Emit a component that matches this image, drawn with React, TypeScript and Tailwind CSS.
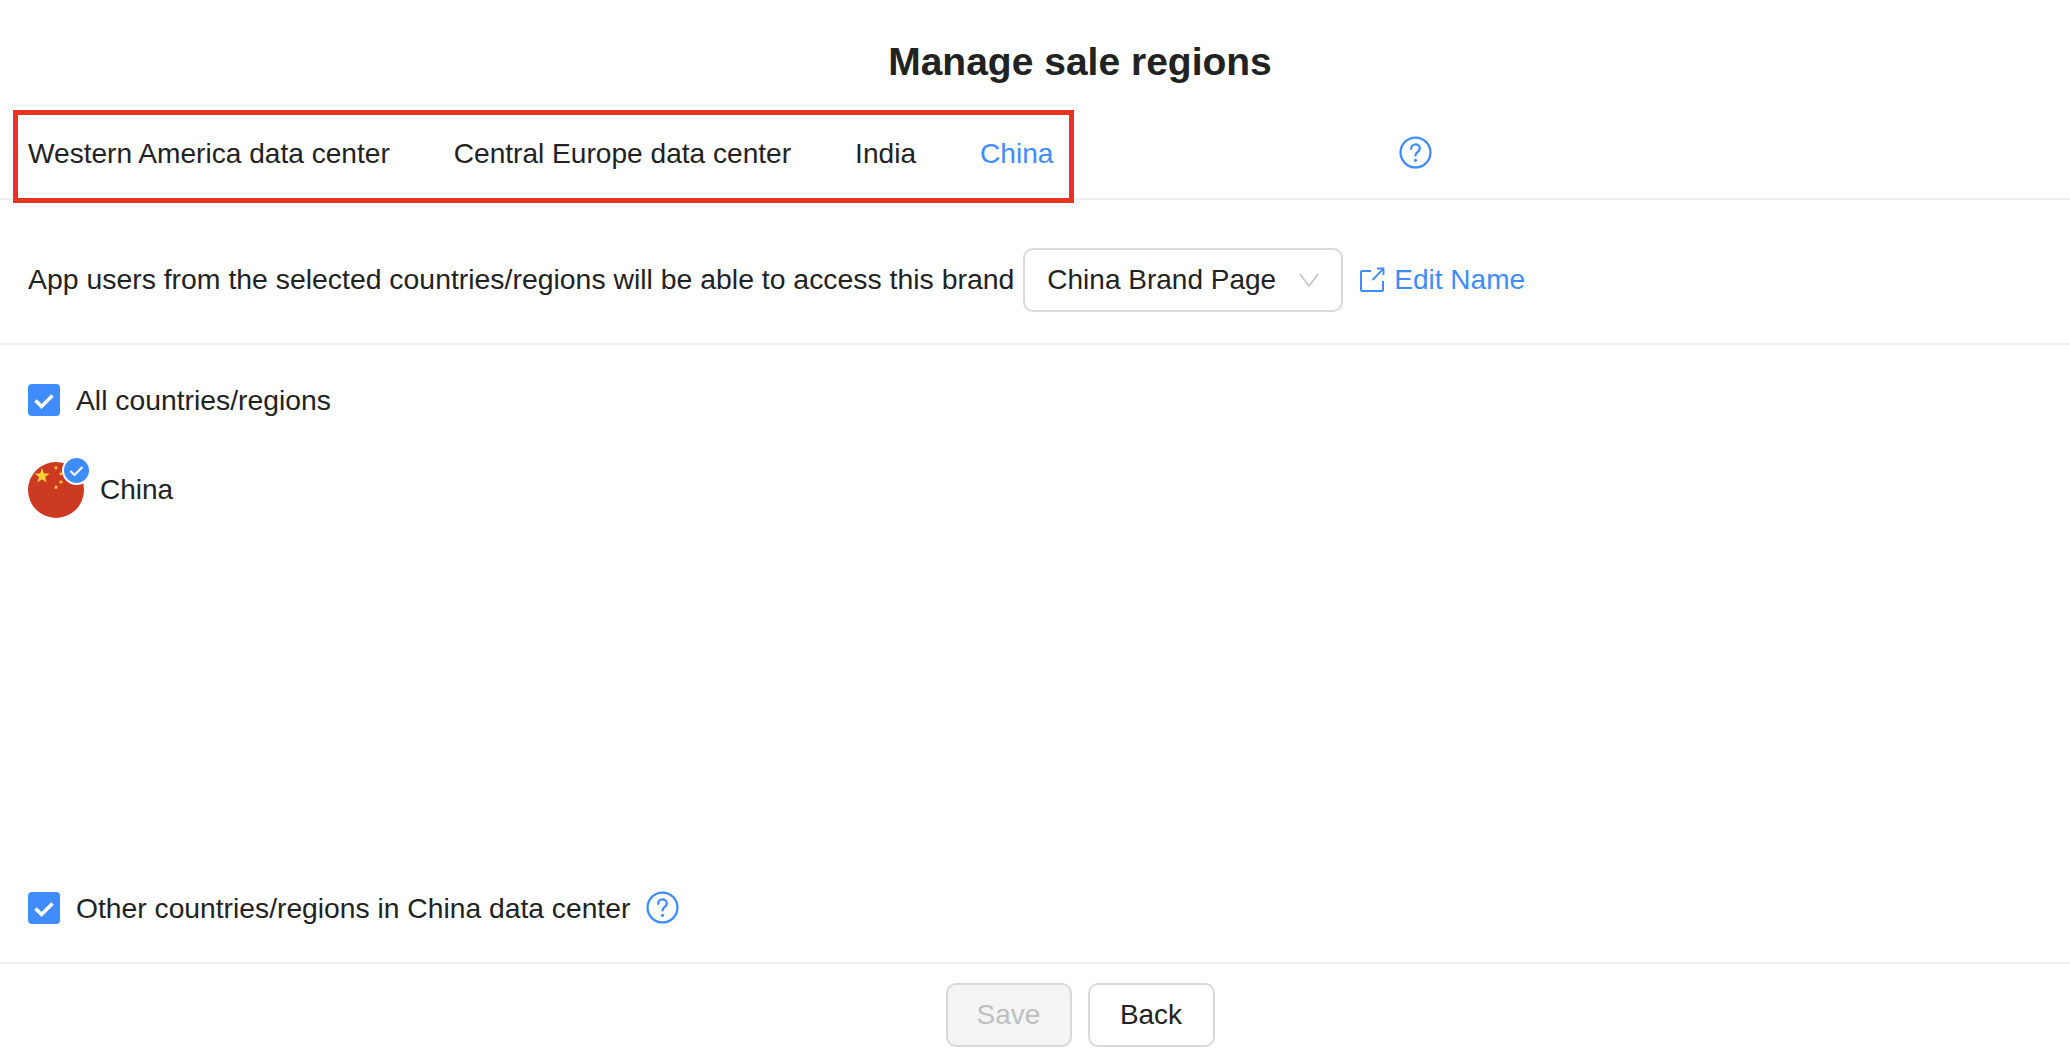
const font = "font-['Liberation_Sans',Arial,sans-serif]";

function HelpIcon({ className }: { className?: string }) {
  return (
    <svg viewBox="0 0 32 32" fill="none" className={className}>
      <circle cx="16" cy="16" r="14.5" stroke="#3f8cff" strokeWidth="2.2" />
      <path
        d="M11.8 12.4c0-2.5 1.9-4.2 4.2-4.2s4.2 1.6 4.2 3.8c0 3.3-4.2 3.4-4.2 6.8"
        stroke="#3f8cff"
        strokeWidth="2.2"
        strokeLinecap="round"
      />
      <circle cx="16" cy="23.6" r="1.5" fill="#3f8cff" />
    </svg>
  );
}

function EditIcon() {
  return (
    <svg viewBox="0 0 25 25" fill="none" className="h-[25px] w-[25px]">
      <path
        d="M11 4H2a1 1 0 0 0-1 1v18a1 1 0 0 0 1 1h20a1 1 0 0 0 1-1V14"
        stroke="#3f8cff"
        strokeWidth="2"
      />
      <path d="M12.5 13 23 2.2M17 1.5h6.5V8" stroke="#3f8cff" strokeWidth="1.8" />
    </svg>
  );
}

function CheckBox() {
  return (
    <span className="flex h-8 w-8 shrink-0 items-center justify-center rounded bg-[#3f8cff]">
      <svg viewBox="0 0 32 32" fill="none" className="h-8 w-8">
        <path d="m7.5 16.5 6 6 11-11" stroke="#fff" strokeWidth="3.6" />
      </svg>
    </span>
  );
}

// five pointed star centred on cx, cy
function star(cx: number, cy: number, r: number) {
  const pts: string[] = [];
  for (let i = 0; i < 10; i++) {
    const a = -Math.PI / 2 + (i * Math.PI) / 5;
    const d = i % 2 === 0 ? r : r * 0.4;
    pts.push(`${(cx + d * Math.cos(a)).toFixed(2)},${(cy + d * Math.sin(a)).toFixed(2)}`);
  }
  return pts.join(" ");
}

function ChinaFlag() {
  return (
    <svg viewBox="0 0 56 56" className="h-14 w-14">
      <circle cx="28" cy="28" r="28" fill="#cc3a21" />
      <polygon points={star(14, 14, 8)} fill="#fbd136" />
      <polygon points={star(28, 5.8, 2.5)} fill="#fbd136" />
      <polygon points={star(33, 11.7, 2.5)} fill="#fbd136" />
      <polygon points={star(33, 20, 2.5)} fill="#fbd136" />
      <polygon points={star(28, 25.3, 2.5)} fill="#fbd136" />
    </svg>
  );
}

const tabs = ["Western America data center", "Central Europe data center", "India", "China"];

export default function App() {
  return (
    <div className={`${font} relative flex h-[1060px] w-full flex-col overflow-hidden bg-white text-[28px] text-[#222222]`}>
      <h1 className="flex h-[112px] shrink-0 items-center justify-center pt-[10px] pl-[90px] text-[39px] leading-none font-bold">
        Manage sale regions
      </h1>

      <div className="flex h-[88px] shrink-0 items-center border-b-2 border-[#efefef] pb-[2px] pl-7">
        <div className="flex gap-16 text-[28.1px]">
          {tabs.map((t) => (
            <span key={t} className={t === "China" ? "text-[#3f8cff]" : ""}>
              {t}
            </span>
          ))}
        </div>
        <HelpIcon className="mb-[4px] ml-[346px] h-[33px] w-[33px]" />
      </div>

      <div className="flex h-[145px] shrink-0 items-center border-b-2 border-[#efefef] pt-[16px] pl-7">
        <span className="text-[28.4px]">App users from the selected countries/regions will be able to access this brand</span>
        <div className="ml-[9px] flex h-16 w-[320px] items-center justify-between rounded-[10px] border-2 border-[#d9d9d9] pr-[22px] pl-[22px]">
          <span>China Brand Page</span>
          <svg viewBox="0 0 20 14" fill="none" className="h-[14px] w-5">
            <path d="m1 1 9 12 9-12" stroke="#c4c4c4" strokeWidth="1.6" />
          </svg>
        </div>
        <div className="ml-[17px] flex items-center gap-[9px] text-[#3f8cff]">
          <EditIcon />
          <span>Edit Name</span>
        </div>
      </div>

      <div className="flex min-h-0 flex-1 flex-col pl-7">
        <label className="mt-[34px] flex items-center gap-4 text-[28.3px]">
          <CheckBox />
          <span>All countries/regions</span>
        </label>
        <div className="mt-[41px] flex items-center gap-4">
          <div className="relative h-14 w-14">
            <ChinaFlag />
            <span className="absolute top-[-6px] left-[34px] flex h-[29px] w-[29px] items-center justify-center rounded-full border-2 border-white bg-[#3f8cff]">
              <svg viewBox="0 0 25 25" fill="none" className="h-[25px] w-[25px]">
                <path d="m6.5 13 4 4 8-8" stroke="#fff" strokeWidth="2" />
              </svg>
            </span>
          </div>
          <span>China</span>
        </div>
        <label className="mt-auto mb-[33px] flex items-center gap-4 text-[28.25px]">
          <CheckBox />
          <span>Other countries/regions in China data center</span>
          <HelpIcon className="h-[33px] w-[33px]" />
        </label>
      </div>

      <div className="flex h-[98px] shrink-0 justify-center gap-4 border-t-2 border-[#efefef] pt-[19px] pl-[90px]">
        <button className="h-16 w-[126px] rounded-[10px] border-2 border-[#d9d9d9] bg-[#f4f4f4] text-[#bfbfbf]">
          Save
        </button>
        <button className="h-16 w-[127px] rounded-[10px] border-2 border-[#d9d9d9] bg-white">Back</button>
      </div>

      {/* annotation drawn over the tab bar */}
      <div className="pointer-events-none absolute top-[110px] left-[13px] h-[93px] w-[1061px] border-[5px] border-[#ea3323]" />
    </div>
  );
}
